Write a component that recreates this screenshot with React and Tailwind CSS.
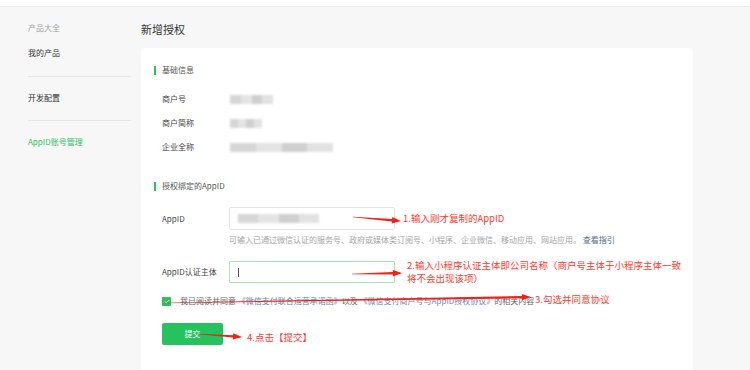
const Arrow = ({ x1, y1, x2, y2 }) => {
    // tapered red annotation arrow
    const dx = x2 - x1, dy = y2 - y1;
    const len = Math.hypot(dx, dy);
    const ux = dx / len, uy = dy / len;
    const nx = -uy, ny = ux;
    const hl = 9, hw = 3.2;
    const bx = x2 - ux * hl, by = y2 - uy * hl;
    const p = (x, y) => `${x.toFixed(1)},${y.toFixed(1)}`;
    const pts = [
        p(x1 + nx * 0.3, y1 + ny * 0.3),
        p(bx + nx * 1.2, by + ny * 1.2),
        p(bx + nx * hw, by + ny * hw),
        p(x2, y2),
        p(bx - nx * hw, by - ny * hw),
        p(bx - nx * 1.2, by - ny * 1.2),
        p(x1 - nx * 0.3, y1 - ny * 0.3),
    ].join(" ");
    return <polygon points={pts} fill="#f0201a" />;
};

const Blur = ({ w }) => (
    <div className="flex h-[9px] blur-[1.2px]" style={{ width: w }}>
        <div className="flex-1 bg-[#d6d6d6]" />
        <div className="flex-1 bg-[#e4e4e4]" />
        <div className="flex-1 bg-[#cfcfcf]" />
        <div className="flex-1 bg-[#e2e2e2]" />
    </div>
);

const Row = ({ label, w }) => (
    <div className="h-[24px] flex items-center">
        <span className="w-[68px] text-[#444]">{label}</span>
        <Blur w={w} />
    </div>
);

const Heading = ({ children }) => (
    <div className="h-[12px] flex items-center gap-[6px] -ml-[8px]">
        <span className="w-[2px] h-[9px] bg-[#2bc25c]" />
        <span className="text-[#555]">{children}</span>
    </div>
);

export default function App() {
    return (
        <div className="relative w-[750px] h-[370px] overflow-hidden bg-[#f7f7f7] text-[8px] leading-[12px] font-['Noto_Sans_CJK_SC',sans-serif]">
            <div className="h-[7px] bg-white border-b border-[#ececec]" />
            <div className="flex pl-[28px]">
                <div className="w-[103px] pt-[15px]">
                    <div className="h-[12px] text-[#a3a3a3]">产品大全</div>
                    <div className="mt-[13px] h-[12px] text-[#333]">我的产品</div>
                    <div className="mt-[17px] border-t border-[#e6e6e6]" />
                    <div className="mt-[15px] h-[12px] text-[#333]">开发配置</div>
                    <div className="mt-[16px] border-t border-[#e6e6e6]" />
                    <div className="mt-[15px] h-[12px] text-[#2bc25c]">AppID账号管理</div>
                </div>
                <div className="ml-[10px] w-[552px] pt-[15px]">
                    <div className="h-[14px] text-[11px] leading-[14px] text-[#333]">新增授权</div>
                    <div className="mt-[12px] h-[340px] bg-white rounded-t-[3px] pt-[16px] pl-[21px]">
                        <Heading>基础信息</Heading>
                        <div className="mt-[11px]">
                            <Row label="商户号" w={43} />
                            <Row label="商户简称" w={32} />
                            <Row label="企业全称" w={103} />
                        </div>
                        <div className="mt-[21px]">
                            <Heading>授权绑定的AppID</Heading>
                        </div>
                        <div className="mt-[15px] flex items-center">
                            <span className="w-[67px] text-[#444]">AppID</span>
                            <div className="w-[166px] h-[23px] border border-[#e3e3e3] rounded-[2px] flex items-center pl-[8px]">
                                <Blur w={81} />
                            </div>
                        </div>
                        <div className="mt-[4px] pl-[67px] text-[#a5a5a5] whitespace-nowrap">
                            可输入已通过微信认证的服务号、政府或媒体类订阅号、小程序、企业微信、移动应用、网站应用。 <span className="text-[#576b95]">查看指引</span>
                        </div>
                        <div className="mt-[15px] flex items-center">
                            <span className="w-[67px] text-[#444]">AppID认证主体</span>
                            <div className="w-[166px] h-[22px] border border-[#a6e4b8] rounded-[2px] flex items-center pl-[8px]">
                                <span className="w-px h-[9px] bg-[#555]" />
                            </div>
                        </div>
                        <div className="mt-[12px] h-[12px] flex items-center gap-[9px] whitespace-nowrap">
                            <span className="w-[9px] h-[9px] rounded-[1px] bg-[#2bc25c] flex items-center justify-center">
                                <svg width="6" height="5" viewBox="0 0 6 5"><path d="M0.8 2.5 L2.4 3.9 L5.2 1" stroke="white" strokeWidth="1" fill="none" /></svg>
                            </span>
                            <span className="text-[#666]">
                                我已阅读并同意 <span className="text-[#6f82ab]">《微信支付联合运营承诺函》</span>以及 <span className="text-[#6f82ab]">《微信支付商户号与AppID授权协议》</span>的相关内容
                            </span>
                        </div>
                        <button className="mt-[16px] w-[61px] h-[22px] rounded-[2px] bg-[#25c35d] text-white text-[8px]">提交</button>
                    </div>
                </div>
            </div>

            <svg className="absolute left-0 top-0 pointer-events-none" width="750" height="370">
                <Arrow x1={353} y1={217} x2={401} y2={221} />
                <Arrow x1={352} y1={274} x2={402} y2={273} />
                <Arrow x1={165} y1={303} x2={531} y2={297} />
                <Arrow x1={198} y1={334} x2={242} y2={337} />
            </svg>
            <div className="absolute left-[403px] top-[212px] text-[9.5px] leading-[13px] text-[#ff3b30] whitespace-nowrap">1.输入刚才复制的AppID</div>
            <div className="absolute left-[407px] top-[259px] text-[9.5px] leading-[12.5px] text-[#ff3b30] whitespace-nowrap">
                2.输入小程序认证主体即公司名称（商户号主体于小程序主体一致<br />将不会出现该项）
            </div>
            <div className="absolute left-[535px] top-[293px] text-[9.5px] leading-[13px] text-[#ff3b30] whitespace-nowrap">3.勾选并同意协议</div>
            <div className="absolute left-[247px] top-[331px] text-[9.5px] leading-[13px] text-[#ff3b30] whitespace-nowrap">4.点击【提交】</div>
        </div>
    );
}
